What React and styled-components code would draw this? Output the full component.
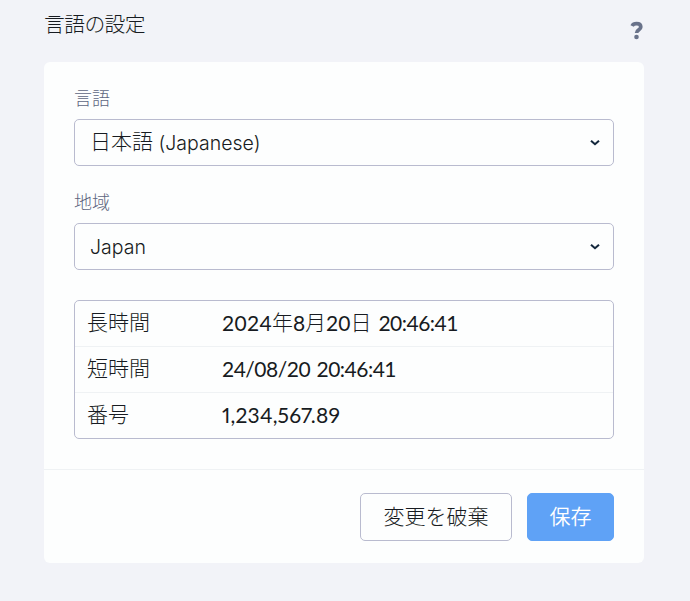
import React, { useState } from 'react';
import styled, { createGlobalStyle } from 'styled-components';

const GlobalStyle = createGlobalStyle`
  *, *::before, *::after {
    box-sizing: border-box;
  }

  body {
    margin: 0;
    background: #f2f3f8;
    color: #171b21;
    font-family: Lato, 'Noto Sans CJK JP', sans-serif;
    font-size: 21px;
    font-weight: 300;
  }
`;

const Page = styled.div`
  width: 690px;
  height: 601px;
  padding: 0 46px 0 44px;
  overflow: hidden;
`;

const Header = styled.header`
  display: flex;
  justify-content: space-between;
  height: 62px;
`;

const Title = styled.h1`
  margin: 9px 0 0;
  font-family: 'Noto Sans CJK JP', sans-serif;
  font-size: 20.8px;
  font-weight: 300;
  line-height: 29px;
  letter-spacing: -0.6px;
`;

const HelpButton = styled.button`
  align-self: flex-start;
  margin-top: 20px;
  padding: 0;
  border: 0;
  background: none;
  color: #69728a;
  line-height: 0;
`;

const Card = styled.section`
  height: 501px;
  background: #fdfefe;
  border-radius: 6px;
`;

const CardBody = styled.div`
  height: 408px;
  padding: 22px 30px 0;
  border-bottom: 1px solid #eff2f4;
`;

const Field = styled.div`
  margin-bottom: 22px;
`;

const Label = styled.div`
  height: 35px;
  color: #5d667e;
  font-size: 18px;
  line-height: 28px;
`;

const SelectBox = styled.button`
  display: flex;
  align-items: center;
  justify-content: space-between;
  width: 100%;
  height: 47px;
  padding: 0 13px 0 15px;
  background: #fdfefe;
  border: 1px solid #b9bbcf;
  border-radius: 5px;
  color: inherit;
  font: inherit;
  white-space: pre;
`;

const SelectText = styled.span`
  height: 45px;
  line-height: 41px;
`;

const Latin = styled.span`
  font-weight: 400;
  letter-spacing: ${({ $spacing }) => $spacing || 0}px;
  line-height: 1;
  vertical-align: -1px;
  font-feature-settings: 'pnum' ${({ $proportional }) => ($proportional ? 1 : 0)};
`;

const LightLatin = styled(Latin)`
  font-family: Inter, sans-serif;
  font-size: 19.5px;
  font-weight: 300;
`;

const Samples = styled.dl`
  height: 139px;
  margin: 30px 0 0;
  border: 1px solid #b9bbcf;
  border-radius: 5px;
`;

const SampleRow = styled.div`
  display: flex;
  height: 46px;
  padding-left: 12px;
  line-height: 42px;

  &:first-child {
    height: 45px;
  }

  & + & {
    border-top: 1px solid #eff2f4;
  }
`;

const SampleName = styled.dt`
  width: 135px;
`;

const SampleValue = styled.dd`
  margin: 0;
  white-space: pre;
`;

const CardFooter = styled.footer`
  display: flex;
  justify-content: flex-end;
  gap: 15px;
  padding: 23px 30px 0;
`;

const Button = styled.button`
  width: ${({ $width }) => $width}px;
  height: 48px;
  padding: 0 0 5px;
  background: ${({ $primary }) => ($primary ? '#5fa2f6' : '#fdfefe')};
  border: 1px solid ${({ $primary }) => ($primary ? '#5fa2f6' : '#b9bbcf')};
  border-radius: 5px;
  color: ${({ $primary }) => ($primary ? '#fff' : '#171b21')};
  font: inherit;
  font-weight: ${({ $primary }) => ($primary ? 350 : 300)};
`;

const HelpIcon = () => (
  <svg width="14" height="20" viewBox="0 0 14 20" fill="none" stroke="currentColor">
    <path d="M2.1 6C3 4.3 4.4 3.7 6.5 3.7C9.2 3.7 10.8 4.9 10.8 7C10.8 10.2 6.6 9.6 6.6 13" strokeWidth="3.7" />
    <circle cx="6.5" cy="17" r="2.3" fill="currentColor" stroke="none" />
  </svg>
);

const Chevron = () => (
  <svg width="10" height="8" viewBox="0 0 10 8" fill="none" stroke="#14283d" strokeWidth="2.1">
    <path d="M1 1.8L5 5.2L9 1.8" />
  </svg>
);

const App = () => {
  const [language] = useState('Japanese');
  const [region] = useState('Japan');

  return (
    <>
      <GlobalStyle />
      <Page>
        <Header>
          <Title>言語の設定</Title>
          <HelpButton aria-label="?">
            <HelpIcon />
          </HelpButton>
        </Header>

        <Card>
          <CardBody>
            <Field>
              <Label>言語</Label>
              <SelectBox>
                <SelectText>日本語<LightLatin> ({language})</LightLatin></SelectText>
                <Chevron />
              </SelectBox>
            </Field>

            <Field>
              <Label>地域</Label>
              <SelectBox>
                <SelectText><LightLatin>{region}</LightLatin></SelectText>
                <Chevron />
              </SelectBox>
            </Field>

            <Samples>
              <SampleRow>
                <SampleName>長時間</SampleName>
                <SampleValue>
                  <Latin $spacing={0.3}>2024</Latin>年<Latin>8</Latin>月<Latin>20</Latin>日<Latin $spacing={1.5}> </Latin><Latin $spacing={-0.5}>20:46:41</Latin>
                </SampleValue>
              </SampleRow>
              <SampleRow>
                <SampleName>短時間</SampleName>
                <SampleValue><Latin $spacing={-0.5}>24/08/20</Latin><Latin $spacing={1}> </Latin><Latin $spacing={-0.5}>20:46:41</Latin></SampleValue>
              </SampleRow>
              <SampleRow>
                <SampleName>番号</SampleName>
                <SampleValue><Latin $proportional $spacing={0.2}>1,234,567.89</Latin></SampleValue>
              </SampleRow>
            </Samples>
          </CardBody>

          <CardFooter>
            <Button $width={152}>変更を破棄</Button>
            <Button $width={87} $primary>保存</Button>
          </CardFooter>
        </Card>
      </Page>
    </>
  );
};

export default App;
